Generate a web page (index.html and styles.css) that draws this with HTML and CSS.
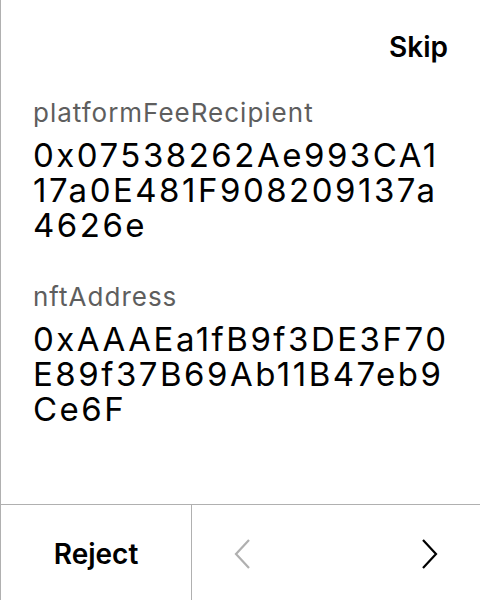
FILE: index.html
```
<!DOCTYPE html>
<html>
<head>
<meta charset="utf-8">
<link rel="stylesheet" href="styles.css">
</head>
<body>
<div class="screen">
  <div class="top">
    <span class="skip">Skip</span>
  </div>
  <div class="content">
    <div class="field">
      <div class="label">platformFeeRecipient</div>
      <div class="value"><span class="ln">0x07538262Ae993CA1</span><span class="ln">17a0E481F908209137a</span><span class="ln">4626e</span></div>
    </div>
    <div class="field">
      <div class="label">nftAddress</div>
      <div class="value"><span class="ln">0xAAAEa1fB9f3DE3F70</span><span class="ln">E89f37B69Ab11B47eb9</span><span class="ln">Ce6F</span></div>
    </div>
  </div>
  <div class="bottom">
    <div class="reject">Reject</div>
    <div class="nav">
      <svg class="chev" width="16" height="30" viewBox="0 0 16 30"><path d="M15 1 L2 15 L15 29" fill="none" stroke="#b0b0b0" stroke-width="2.2"/></svg>
      <svg class="chev" width="16" height="30" viewBox="0 0 16 30"><path d="M1 1 L14 15 L1 29" fill="none" stroke="#000" stroke-width="2.2"/></svg>
    </div>
  </div>
</div>
</body>
</html>
```
FILE: styles.css
```
* { box-sizing: border-box; }
html, body { margin: 0; padding: 0; background: #fff; }
body { font-family: Inter, "Noto Sans", sans-serif; color: #000; }
.screen {
  width: 480px; height: 600px;
  border-left: 1px solid #b0b0b0;
  display: flex; flex-direction: column;
}
.top {
  height: 97px;
  display: flex; justify-content: flex-end; align-items: flex-start;
  padding: 30px 32px 0 0;
}
.skip { font-size: 28px; font-weight: 600; line-height: 34px; }
.content { flex: 1; padding: 0 20px 0 32px; }
.field { margin-bottom: 38px; }
.label { font-size: 26px; color: #5e5e5e; line-height: 32px; margin-bottom: 9px; letter-spacing: 1px; }
.value { font-size: 33px; line-height: 35px; letter-spacing: 2.5px; white-space: nowrap; }
.ln { display: block; height: 35px; }
.bottom {
  height: 96px; border-top: 1px solid #b0b0b0;
  display: flex;
}
.reject {
  width: 191px; border-right: 1px solid #b0b0b0;
  display: flex; align-items: center; justify-content: center;
  font-size: 28px; font-weight: 600; padding-top: 2px;
}
.nav { flex: 1; display: flex; align-items: center; justify-content: space-between; padding: 2px 42px 0 42px; }
```
